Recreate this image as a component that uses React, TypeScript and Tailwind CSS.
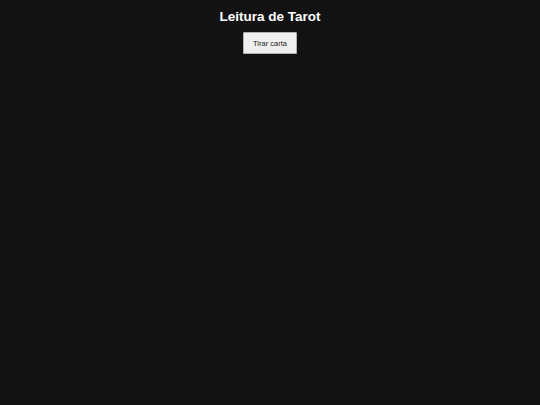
export default function App() {
  return (
    <div className="min-h-screen w-full bg-[#121212] text-white font-['Liberation_Sans',Arial,sans-serif] flex flex-col items-center">
      <h1 className="mt-[9px] text-[13.5px] leading-[15px] font-bold">Leitura de Tarot</h1>
      <button className="mt-[8px] px-[9px] py-[5.5px] text-[7.5px] leading-[9px] text-[#222] bg-[#efefef] border border-[#b0b0b0] rounded-[1px]">
        Tirar carta
      </button>
    </div>
  );
}
